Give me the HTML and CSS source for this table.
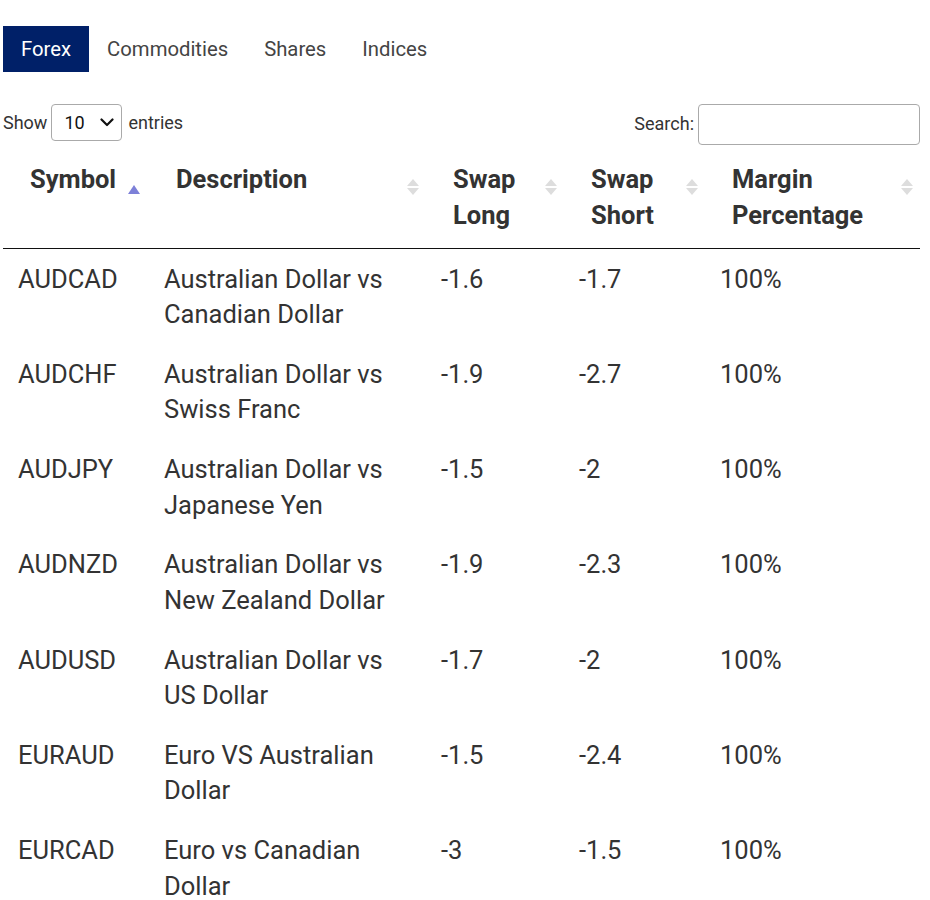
FILE: index.html
```html
<!DOCTYPE html>
<html lang="en">
<head>
<meta charset="utf-8">
<title>Swaps</title>
<link rel="stylesheet" href="styles.css">
</head>
<body>
<div class="page">
  <nav class="tabs">
    <a class="tab active">Forex</a>
    <a class="tab">Commodities</a>
    <a class="tab">Shares</a>
    <a class="tab">Indices</a>
  </nav>
  <div class="controls">
    <label class="length">Show
      <span class="select"><span class="select-val">10</span>
        <svg class="chev" width="14" height="9" viewBox="0 0 14 9"><path d="M1.5 1.5 L7 7 L12.5 1.5" fill="none" stroke="#111" stroke-width="2.2" stroke-linecap="round" stroke-linejoin="round"/></svg>
      </span>
      entries</label>
    <label class="search"><span class="search-label">Search:</span> <span class="search-box"></span></label>
  </div>
  <table class="swaps">
    <colgroup>
      <col class="c1"><col class="c2"><col class="c3"><col class="c4"><col class="c5">
    </colgroup>
    <thead>
      <tr>
        <th><span>Symbol</span><i class="sort asc"></i></th>
        <th><span>Description</span><i class="sort both"></i></th>
        <th><span>Swap<br>Long</span><i class="sort both"></i></th>
        <th><span>Swap<br>Short</span><i class="sort both"></i></th>
        <th><span>Margin<br>Percentage</span><i class="sort both"></i></th>
      </tr>
    </thead>
    <tbody>
      <tr><td>AUDCAD</td><td>Australian Dollar vs Canadian Dollar</td><td>-1.6</td><td>-1.7</td><td>100%</td></tr>
      <tr><td>AUDCHF</td><td>Australian Dollar vs Swiss Franc</td><td>-1.9</td><td>-2.7</td><td>100%</td></tr>
      <tr><td>AUDJPY</td><td>Australian Dollar vs Japanese Yen</td><td>-1.5</td><td>-2</td><td>100%</td></tr>
      <tr><td>AUDNZD</td><td>Australian Dollar vs New Zealand Dollar</td><td>-1.9</td><td>-2.3</td><td>100%</td></tr>
      <tr><td>AUDUSD</td><td>Australian Dollar vs US Dollar</td><td>-1.7</td><td>-2</td><td>100%</td></tr>
      <tr><td>EURAUD</td><td>Euro VS Australian Dollar</td><td>-1.5</td><td>-2.4</td><td>100%</td></tr>
      <tr><td>EURCAD</td><td>Euro vs Canadian Dollar</td><td>-3</td><td>-1.5</td><td>100%</td></tr>
    </tbody>
  </table>
</div>
</body>
</html>
```
FILE: styles.css
```css
html, body {
  margin: 0;
  padding: 0;
  background: #fff;
}
body {
  font-family: Roboto, "Liberation Sans", Arial, sans-serif;
  color: #333;
}
.page {
  padding: 26px 10px 0 3px;
}
.tabs {
  display: flex;
  align-items: stretch;
}
.tab {
  display: flex;
  align-items: center;
  height: 46px;
  padding: 0 18px;
  font-size: 20.3px;
  color: #444;
}
.tab.active {
  background: #002068;
  color: #fff;
}
.controls {
  display: flex;
  justify-content: space-between;
  align-items: flex-start;
  margin-top: 32px;
  font-size: 18px;
  color: #333;
}
.length {
  display: flex;
  align-items: center;
  height: 37px;
}
.select {
  display: inline-flex;
  align-items: center;
  justify-content: space-between;
  box-sizing: border-box;
  width: 71px;
  height: 37px;
  margin: 0 6px 0 4px;
  border: 1px solid #aaa;
  border-radius: 4px;
  padding: 0 7px 0 12px;
  color: #111;
}
.search {
  display: flex;
  align-items: center;
  gap: 4px;
}
.search-label {
  margin-top: -2px;
}
.search-box {
  display: block;
  box-sizing: border-box;
  width: 222px;
  height: 41px;
  border: 1px solid #aaa;
  border-radius: 4px;
}
.swaps {
  width: 917px;
  border-collapse: collapse;
  table-layout: fixed;
  margin-top: 5px;
}
.c1 { width: 146px; }
.c2 { width: 277px; }
.c3 { width: 138px; }
.c4 { width: 141px; }
.c5 { width: 215px; }
.swaps th {
  position: relative;
  text-align: left;
  vertical-align: top;
  font-size: 25.5px;
  line-height: 36px;
  font-weight: 700;
  color: #333;
  padding: 10.5px 26px 15.5px 27px;
  border-bottom: 1px solid #111;
}
.swaps td {
  vertical-align: top;
  font-size: 25.5px;
  line-height: 35.5px;
  color: #333;
  padding: 12.5px 10px 11.8px 15px;
}
.sort {
  position: absolute;
  right: 7px;
  top: 27px;
  width: 12px;
  height: 20px;
}
.sort.asc {
  right: 9px;
}
.sort.asc::before {
  content: "";
  position: absolute;
  left: 0;
  top: 8px;
  border-left: 6px solid transparent;
  border-right: 6px solid transparent;
  border-bottom: 9px solid #7d80d8;
}
.sort.both::before,
.sort.both::after {
  content: "";
  position: absolute;
  left: 0;
  border-left: 6px solid transparent;
  border-right: 6px solid transparent;
}
.sort.both::before {
  top: 2px;
  border-bottom: 7px solid #ddd;
}
.sort.both::after {
  top: 11px;
  border-top: 7px solid #ddd;
}
```
